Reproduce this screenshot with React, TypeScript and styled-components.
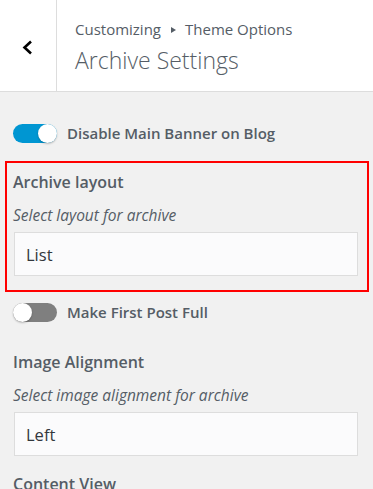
import * as React from 'react';
import styled, { createGlobalStyle } from 'styled-components';

const GlobalStyle = createGlobalStyle`
  html, body {
    margin: 0;
    padding: 0;
    background: #f1f1f1;
    font-family: "Open Sans", "Noto Sans", sans-serif;
    color: #555d66;
  }
`;

const Panel = styled.div`
  width: 373px;
  height: 489px;
  overflow: hidden;
  background: #f1f1f1;
`;

const Header = styled.div`
  display: flex;
  height: 91px;
  background: #fff;
  border-bottom: 1px solid #ddd;
`;

const BackButton = styled.div`
  width: 57px;
  flex: none;
  display: flex;
  align-items: center;
  justify-content: center;
  padding: 4px 2px 0 0;
  box-sizing: border-box;
  border-right: 1px solid #ddd;
`;

const Titles = styled.div`
  display: flex;
  flex-direction: column;
  padding: 19px 0 0 18px;
`;

const Crumbs = styled.div`
  font-size: 15px;
  line-height: 20px;
  color: #555d66;
  display: flex;
  align-items: center;
`;

const CrumbArrow = styled.span`
  width: 0;
  height: 0;
  border-left: 5px solid #555d66;
  border-top: 3.5px solid transparent;
  border-bottom: 3.5px solid transparent;
  margin: 1px 9px 0 10px;
`;

const Title = styled.div`
  font-size: 23px;
  font-weight: 300;
  line-height: 30px;
  margin-top: 6px;
  color: #555d66;
`;

const Content = styled.div`
  display: flex;
  flex-direction: column;
  padding: 31px 15px 0 13px;
`;

const ToggleRow = styled.label<{ $mb?: number }>`
  display: flex;
  align-items: center;
  gap: 10px;
  height: 20px;
  margin-bottom: ${p => p.$mb ?? 0}px;
`;

const Switch = styled.span<{ $on: boolean }>`
  position: relative;
  width: 44px;
  height: 19px;
  border-radius: 10px;
  background: ${p => (p.$on ? '#0096d2' : '#7f7f7f')};
  flex: none;
  &::after {
    content: '';
    position: absolute;
    top: 0;
    left: ${p => (p.$on ? '25px' : '0')};
    width: 19px;
    height: 19px;
    border-radius: 50%;
    background: #fff;
    box-shadow: 0 1px 2px rgba(0, 0, 0, 0.25);
  }
`;

const ToggleLabel = styled.span`
  font-size: 15px;
  font-weight: 600;
  line-height: 20px;
  color: #555d66;
`;

const Control = styled.div<{ $highlight?: boolean }>`
  display: flex;
  flex-direction: column;
  margin: ${p => (p.$highlight ? '0 -11px 0 -8px' : '0')};
  padding: ${p => (p.$highlight ? '8px 9px 14px 6px' : '0')};
  border: ${p => (p.$highlight ? '2px solid #ff0000' : 'none')};
`;

const ControlTitle = styled.div`
  font-size: 16px;
  font-weight: 600;
  line-height: 22px;
  color: #555d66;
`;

const Description = styled.div`
  font-size: 15.5px;
  font-style: italic;
  line-height: 20px;
  margin-top: 12px;
  color: #555d66;
`;

const Select = styled.div`
  margin: 7px 0 0 1px;
  height: 44px;
  box-sizing: border-box;
  display: flex;
  align-items: center;
  padding-left: 11px;
  background: #fbfbfc;
  border: 1px solid #ddd;
  font-size: 16.5px;
  color: #32373c;
`;

const Spacer = styled.div<{ $h: number }>`
  height: ${p => p.$h}px;
  flex: none;
`;

export default function App() {
  return (
    <Panel>
      <GlobalStyle />
      <Header>
        <BackButton>
          <svg width="11" height="15" viewBox="0 0 11 15">
            <path d="M9 1.5 L2.5 7.5 L9 13.5" fill="none" stroke="#000" strokeWidth="2.6" />
          </svg>
        </BackButton>
        <Titles>
          <Crumbs>
            Customizing<CrumbArrow />Theme Options
          </Crumbs>
          <Title>Archive Settings</Title>
        </Titles>
      </Header>
      <Content>
        <ToggleRow $mb={18}>
          <Switch $on />
          <ToggleLabel>Disable Main Banner on Blog</ToggleLabel>
        </ToggleRow>
        <Control $highlight>
          <ControlTitle>Archive layout</ControlTitle>
          <Description>Select layout for archive</Description>
          <Select>List</Select>
        </Control>
        <Spacer $h={10} />
        <ToggleRow $mb={29}>
          <Switch $on={false} />
          <ToggleLabel>Make First Post Full</ToggleLabel>
        </ToggleRow>
        <Control>
          <ControlTitle>Image Alignment</ControlTitle>
          <Description>Select image alignment for archive</Description>
          <Select>Left</Select>
        </Control>
        <Spacer $h={17} />
        <Control>
          <ControlTitle>Content View</ControlTitle>
        </Control>
      </Content>
    </Panel>
  );
}
